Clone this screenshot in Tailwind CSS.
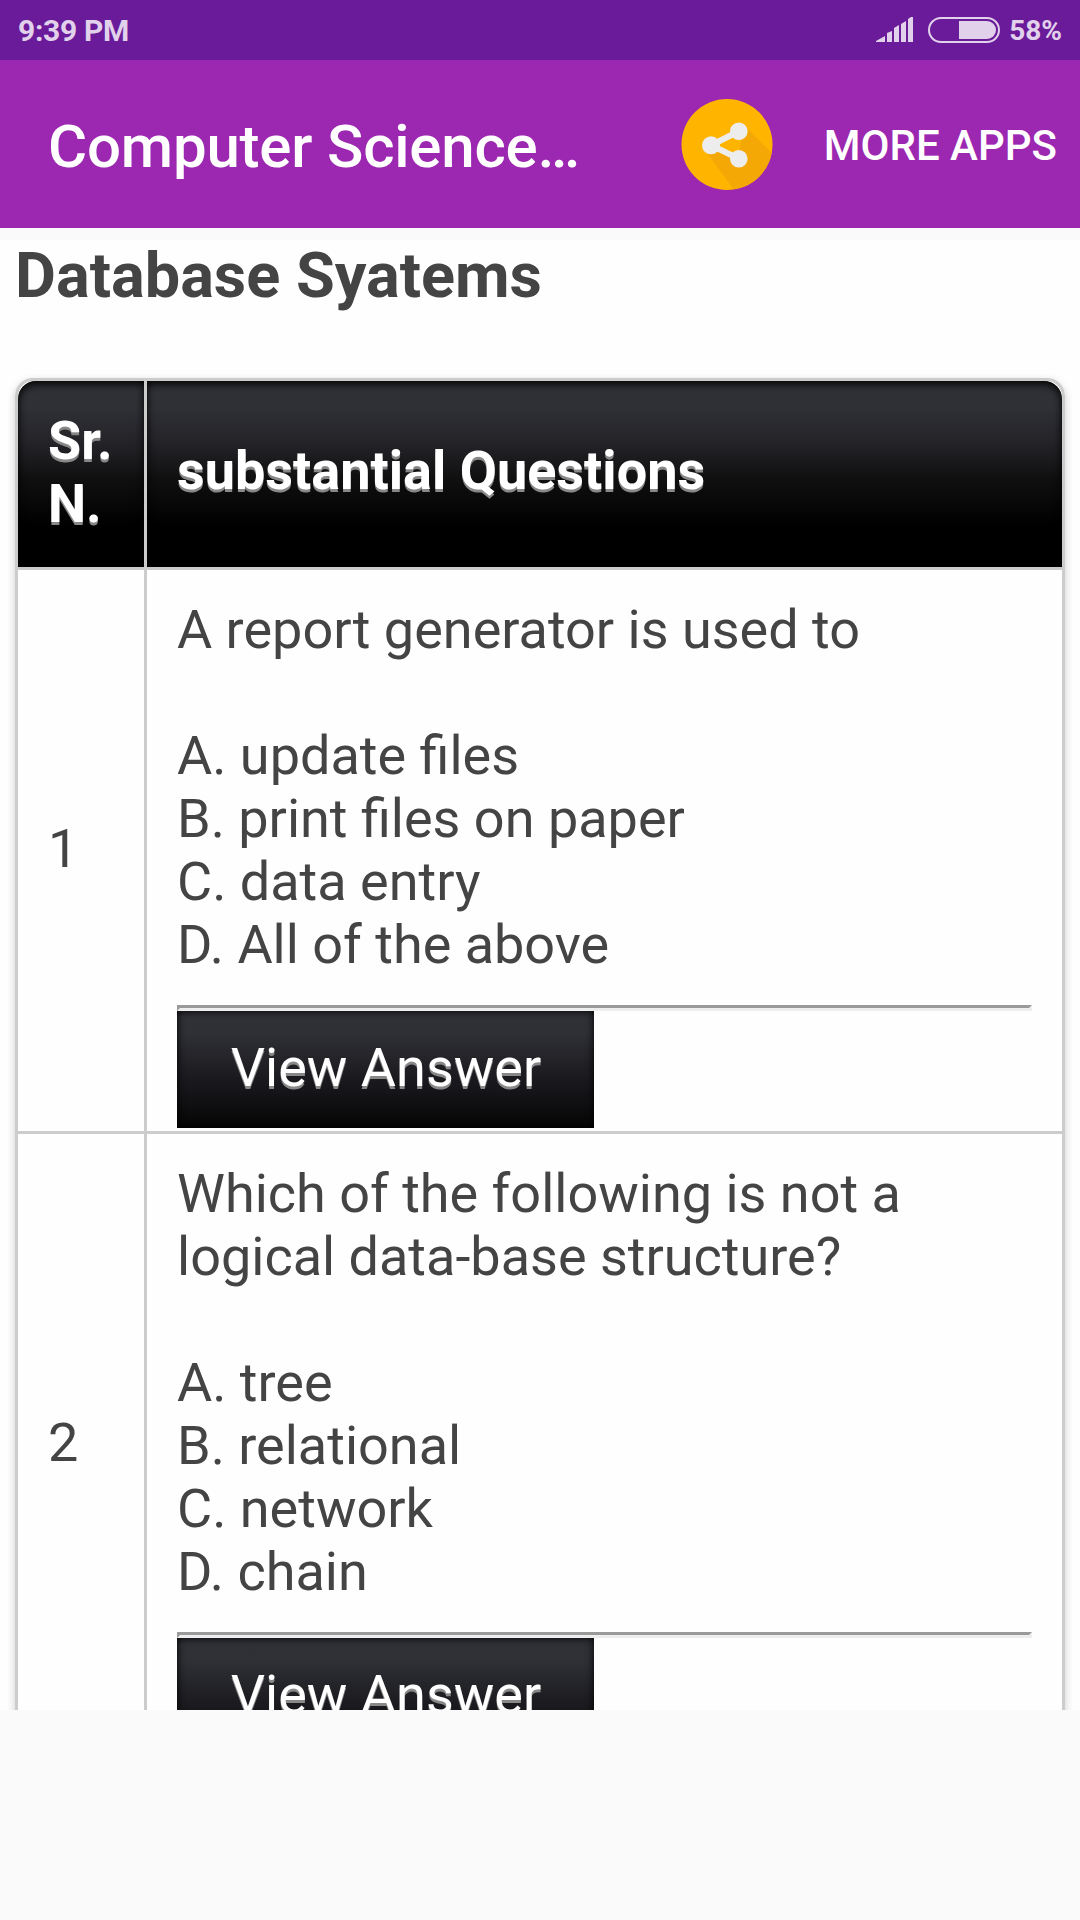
<!DOCTYPE html>
<html lang="en">
<head>
  <meta charset="utf-8" />
  <meta content="width=device-width, initial-scale=1" name="viewport" />
  <title>Computer Science - Database Systems</title>
  <script src="https://cdn.jsdelivr.net/npm/@tailwindcss/browser@4"></script>
  <style>
    body {
      font-family: Roboto, "Liberation Sans", sans-serif;
    }
  </style>
</head>
<body class="bg-[#fafafa] w-[1080px] h-[1920px] overflow-hidden flex flex-col">
  <!-- Status bar -->
  <div class="h-[60px] shrink-0 bg-[#6a1b9a] text-[#e1d1eb] flex items-center justify-between pl-[18px] pr-[18px]">
    <span class="text-[30px] font-bold leading-none tracking-[-0.3px] pt-px">9:39 PM</span>
    <div class="flex items-center">
      <svg class="w-[37px] h-[26px] mr-[15px]" viewBox="0 0 37 26" fill="currentColor" aria-hidden="true">
        <path d="M0 25v-1l9-5v6zM11 25V16l5-2v11zM18 25V11l5-3v17zM25 25V7l5-3v21zM32 25V2l3-2h2v25z" />
      </svg>
      <svg class="w-[72px] h-[26px] mr-[9px]" viewBox="0 0 72 26" aria-hidden="true">
        <rect x="1" y="1" width="70" height="24" rx="12" fill="none" stroke="currentColor" stroke-width="2" />
        <path d="M31 4h28a9 9 0 0 1 0 18H31z" fill="currentColor" />
      </svg>
      <span class="text-[28px] font-bold leading-none pt-px">58%</span>
    </div>
  </div>

  <!-- App bar -->
  <header class="h-[168px] shrink-0 bg-[#9c27b0] text-white flex items-center pl-12 pr-[23px]">
    <h1 class="text-[60px] font-medium leading-[70px] pt-[6px] tracking-[-0.2px]">Computer Science…</h1>
    <button class="ml-auto mr-[51px] pt-px" type="button" aria-label="Share">
      <svg class="w-[92px] h-[92px]" viewBox="0 0 92 92">
        <defs>
          <clipPath id="disc"><circle cx="46" cy="45.5" r="45.5" /></clipPath>
        </defs>
        <circle cx="46" cy="45.5" r="45.5" fill="#ffb400" />
        <path d="M63 26L92 55V92H54L23 50L28 46L57 59Z" fill="#f4a805" clip-path="url(#disc)" />
        <path d="M58 32.3L30 46.3L58 59.7" fill="none" stroke="#ededed" stroke-width="6" />
        <circle cx="30" cy="46.3" r="9" fill="#ededed" />
        <circle cx="57.8" cy="32.3" r="8.8" fill="#ededed" />
        <circle cx="57.8" cy="59.7" r="8.8" fill="#ededed" />
      </svg>
    </button>
    <button class="text-[42px] font-medium leading-[50px] pt-[3px]" type="button">MORE APPS</button>
  </header>

  <!-- Question list -->
  <main class="mt-3 h-[1470px] shrink-0 overflow-hidden bg-[#fefefe] text-[#444] px-[15px]">
    <h2 class="text-[63px] font-bold leading-[72px] mb-[66px]">Database Syatems</h2>

    <div class="w-[1050px] border-3 border-[#ccc] rounded-t-[18px] overflow-hidden shadow-[0_3px_9px_rgba(0,0,0,0.2)]">
      <table class="w-full table-fixed border-separate border-spacing-0 text-[54px] leading-[63px]">
        <thead class="text-white text-left text-shadow-[0_3px_0_#888]">
          <tr>
            <th class="w-[129px] h-[189px] px-[30px] pb-1 rounded-tl-[18px] border-r-3 border-b-3 border-[#ccc] bg-clip-padding bg-linear-[to_bottom,#313238_0%,#2e3035_15%,#242328_33%,#101011_52%,#000_78%] shadow-[inset_0_3px_9px_#000]">Sr. N.</th>
            <th class="px-[30px] pb-2 rounded-tr-[18px] border-b-3 border-[#ccc] bg-clip-padding bg-linear-[to_bottom,#313238_0%,#2e3035_15%,#242328_33%,#101011_52%,#000_78%] shadow-[inset_0_3px_9px_#000]">substantial Questions</th>
          </tr>
        </thead>
        <tbody>
          <tr>
            <td class="px-[30px] pb-1 border-r-3 border-b-3 border-[#ccc]">1</td>
            <td class="px-[30px] pt-7 pb-[3px] border-b-3 border-[#ccc]">
              A report generator is used to<br /><br />
              A. update files<br />
              B. print files on paper<br />
              C. data entry<br />
              D. All of the above
              <hr class="mt-[29px] border-3 border-t-[#9a9a9a] border-l-[#9a9a9a] border-r-[#eee] border-b-[#eee]" />
              <button class="block w-[417px] h-[117px] pb-1 pl-px text-white text-shadow-[0_3px_0_#888] bg-linear-[to_bottom,#313238_0%,#2e3035_20%,#1c1b20_55%,#050505_100%] shadow-[inset_0_0_9px_#000]" type="button">View Answer</button>
            </td>
          </tr>
          <tr>
            <td class="px-[30px] pb-2 border-r-3 border-b-3 border-[#ccc]">2</td>
            <td class="px-[30px] pt-7 pb-[3px] border-b-3 border-[#ccc]">
              Which of the following is not a logical data-base structure?<br /><br />
              A. tree<br />
              B. relational<br />
              C. network<br />
              D. chain
              <hr class="mt-[29px] border-3 border-t-[#9a9a9a] border-l-[#9a9a9a] border-r-[#eee] border-b-[#eee]" />
              <button class="block w-[417px] h-[117px] pb-1 pl-px text-white text-shadow-[0_3px_0_#888] bg-linear-[to_bottom,#313238_0%,#2e3035_20%,#1c1b20_55%,#050505_100%] shadow-[inset_0_0_9px_#000]" type="button">View Answer</button>
            </td>
          </tr>
        </tbody>
      </table>
    </div>
  </main>
</body>
</html>
